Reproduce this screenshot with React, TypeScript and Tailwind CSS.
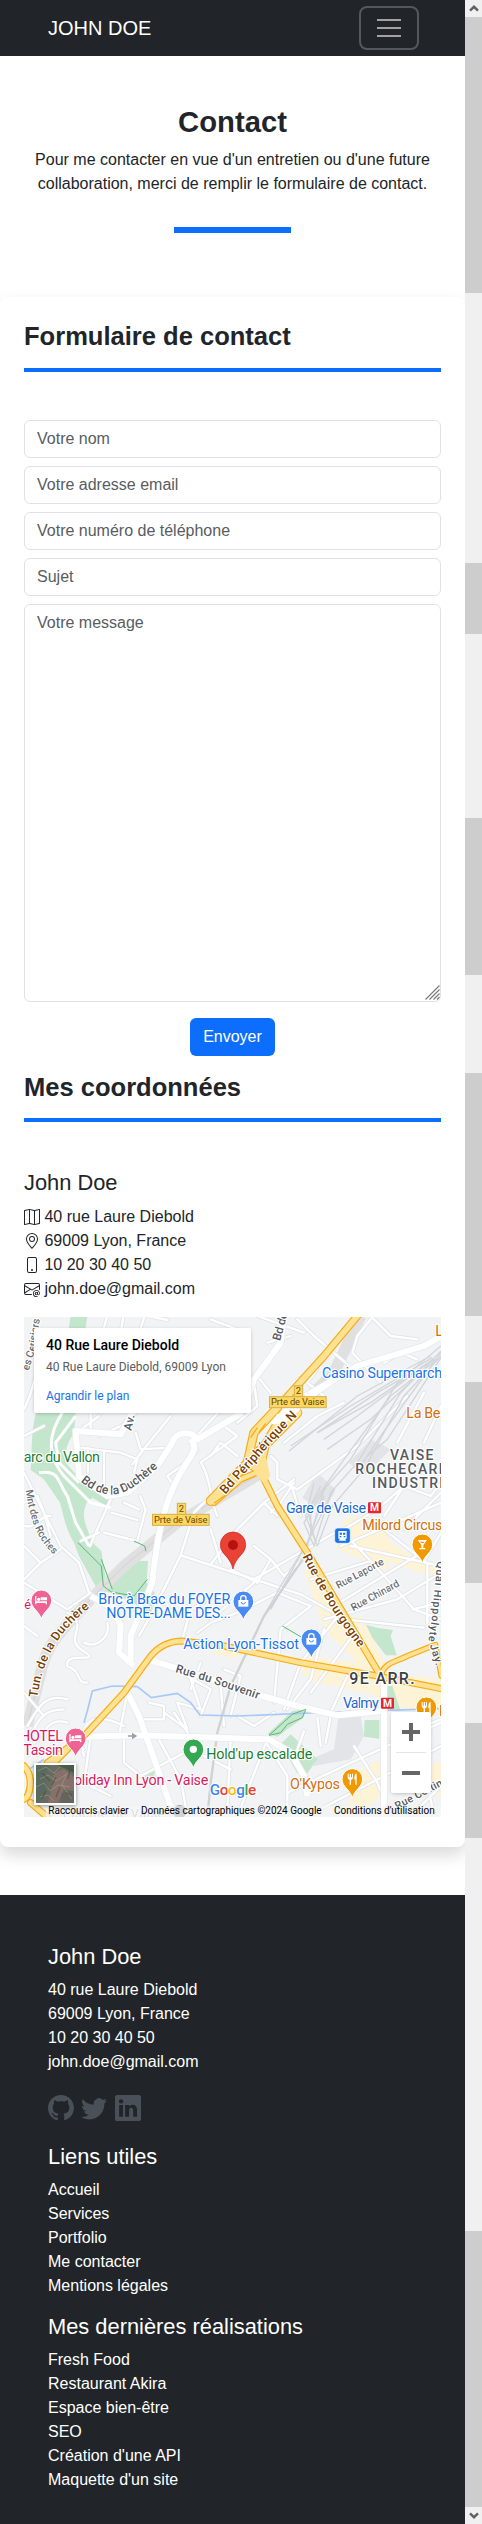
import React from "react";
import {
  BsMap,
  BsGeoAlt,
  BsPhone,
  BsEnvelopeAt,
  BsGithub,
  BsTwitter,
  BsLinkedin,
} from "react-icons/bs";

const contactFields = ["Votre nom", "Votre adresse email", "Votre numéro de téléphone", "Sujet"];

const contactDetails = [
  { icon: BsMap, text: "40 rue Laure Diebold" },
  { icon: BsGeoAlt, text: "69009 Lyon, France" },
  { icon: BsPhone, text: "10 20 30 40 50" },
  { icon: BsEnvelopeAt, text: "john.doe@gmail.com" },
];

const links = ["Accueil", "Services", "Portfolio", "Me contacter", "Mentions légales"];
const projects = [
  "Fresh Food",
  "Restaurant Akira",
  "Espace bien-être",
  "SEO",
  "Création d'une API",
  "Maquette d'un site",
];

/* ---------- Map drawing ---------- */

const greens = [
  "M140 0H190L184 40H134Z",
  "M36 290H155L150 352C135 370 118 410 125 440L160 480L200 520L262 545L245 568L205 545L188 560C175 590 178 610 192 645L205 680L232 705L245 790L330 735L372 735L368 800L392 830L380 900L350 880L330 860L268 832L220 820L165 720L150 680C125 640 120 600 108 560L60 490L20 462C25 400 20 350 36 290Z",
  "M1026 926L1062 936L1107 942L1100 960L1118 1018H1085L1045 965Z",
  "M730 1255L805 1185L848 1180L838 1205L790 1240L760 1262Z",
  "M770 1285L800 1255L880 1330L850 1372H820Z",
  "M1022 1212H1066V1268L1020 1262Z",
  "M358 1372L395 1358L390 1380L362 1386Z",
  "M1085 1110H1105L1130 1185H1085Z",
];

const yellows = [
  "M960 612L990 600L1080 640L1100 680L1190 735L1251 750V790L1080 735L1000 725L940 700Z",
  "M840 760L880 770L960 900L1010 900L1100 1070L1251 1090V1170L1150 1180L1030 1130L860 1095L830 1062L845 1018L1000 1040L900 940Z",
  "M560 990L640 1000L640 1030L575 1015Z",
  "M985 700L1050 690L1100 760L1040 760Z",
  "M1010 1360L1070 1330V1440L1000 1500H960Z",
  "M1190 1340H1251V1440H1200Z",
];

const minorRoads = [
  "M250 0L238 40M298 0L292 40M362 0L350 36M372 0L430 12M60 330L0 360M60 60C40 90 50 180 0 280",
  "M150 355L225 300M200 350V292M225 360L290 330L335 290M165 395L290 410M192 395V470M240 410V530M290 410L340 430L330 470M335 350L350 400L440 395M440 300L355 405L325 445M450 510L430 480L500 430L520 400L500 380",
  "M262 545L220 640L198 690M348 540L365 580L340 675L240 650M262 590L340 612M225 650L170 675M345 580L300 560",
  "M0 560L40 540L60 590L80 660M0 470L30 530L110 690L165 740L195 830M0 690L50 740L0 790M50 740L110 700M0 630C40 640 40 600 80 600",
  "M580 600C560 560 560 480 530 440L640 360L600 330M560 420L590 380L640 420M500 380L600 270L690 180M640 320L700 270L690 200M700 180L740 230M730 80L800 60M900 240L850 200L880 160L820 190",
  "M820 10L870 60L1000 170M700 0L840 50M1000 60L985 110L1070 200M1000 60L1040 10M1080 140L1130 110L1180 130M560 10L640 40M1040 0L1100 60L1180 70",
  "M470 718L510 590L600 500M470 718L830 835L930 890M470 718L390 880L345 960M560 745L640 640L720 560L810 490M590 740L560 640M620 760L700 800L740 730L690 690M690 790L950 640M740 730L780 780L850 720M720 560L760 600",
  "M740 420L760 440L760 490L820 520M820 520L1000 390L1150 240M810 500L770 560L740 590M780 380L880 300L960 260M830 600L800 500",
  "M1120 380L1200 230M1200 380L1251 270M1140 510L1060 580L960 640M1080 600L1140 510L1220 540L1251 500M1251 530L1180 600L1140 640M950 690L1080 635L1251 560",
  "M950 640L1040 735L1170 880L1251 910M980 690L1251 750M1080 640L1200 735L1251 650M1210 740L1210 920M860 790L1040 735M900 910L1120 850L1251 770M930 870L1210 700M960 910L1200 935M1165 880L1251 860",
  "M475 970L500 880L540 860M520 950L560 920L640 890L760 830M560 910L690 800M760 830L860 870M950 890L830 1040L780 1180M860 870L770 940L750 1160M900 940L860 1090L790 1180M970 1080L920 1190M1000 940L860 1130",
  "M0 930L40 960M130 890C200 930 120 960 170 1000C250 1050 120 1000 130 1050C180 1070 150 1100 190 1100M250 920C260 960 220 1000 180 980M0 1130L60 1200M130 1150C60 1130 40 1180 10 1230M120 1180C50 1180 40 1220 20 1260M130 1220C70 1200 60 1260 30 1280",
  "M300 1230C180 1170 160 1250 180 1320M310 1130L285 1260M375 1160L420 1170V1210H340M420 1190L490 1240L460 1160L530 1180L500 1090M490 1080L560 1120L530 1200M600 1230L590 1110M620 1200L650 1080L600 1060M640 1200L690 1230L750 1190M530 1040L500 1120",
  "M200 1262L180 1400L260 1440M400 1262L470 1390L490 1500M300 1262V1340L350 1380L500 1300L620 1360M500 1262L450 1190M620 1265L610 1480M720 1270L790 1380V1500M840 1245L810 1330M880 1205L890 1290M920 1200L905 1280M730 1270L680 1400L640 1500",
  "M790 1430L960 1350L1090 1290L1251 1220M850 1500L1080 1380L1251 1290M990 1290L1060 1400L1100 1500M1100 1270L1251 1210M1160 1500L1251 1410M1190 1300L1230 1500M0 800L130 880L200 830",
];

const greyPatches = [
  "M880 470L935 520L900 590L835 545Z",
  "M945 1190L1010 1200L1020 1260L980 1330L870 1350L870 1325L930 1300Z",
  "M975 440L1040 370L1100 400L1020 480Z",
];

const rails = [
  "M1251 90L1120 200L980 430L900 520L850 690",
  "M1251 105L1130 230L1000 440L920 530L870 690",
  "M1251 120L1140 240L1020 460L925 570L880 690",
  "M1240 130L1100 240L960 430L860 570L860 650",
  "M1235 130L1060 230L880 350",
  "M1230 128L1040 260L880 350",
  "M1225 125L980 270L800 390",
  "M1220 120L1000 240L795 405",
  "M1200 150L1000 300L900 370",
  "M1180 180L1040 310L910 400",
  "M1251 125L1090 370L1030 420",
  "M1251 110L1070 360L1010 450",
  "M870 500L850 580L875 680",
  "M890 510L845 600L880 690",
  "M905 515L840 620L870 690",
  "M930 520L860 660L790 790L740 880",
  "M900 540L850 680L770 810L720 900",
];

const greyTunnel = [
  "M1010 0L930 170L860 240",
  "M730 460L460 620L300 750L200 850C130 930 70 970 50 1070L10 1230",
];

const whiteMajors = [
  "M780 0L770 80L690 190L655 290",
  "M655 290L520 370C500 340 450 350 445 380L400 450L310 530L250 540L165 480L155 345L290 355L325 290",
  "M500 370C530 400 490 430 470 470C420 560 400 650 385 800L320 960L320 1040",
  "M200 840L270 880L290 930L285 1010L330 1050",
  "M845 240L1000 150L1200 90L1251 60",
  "M730 320L830 260L960 170",
  "M310 1130L345 1200L440 1470L480 1510",
  "M370 1030L470 1060L700 1135L820 1170L940 1198L1075 1185",
  "M1080 1100V1500",
  "M185 1262L340 1258L735 1270L800 1310L840 1380L850 1440",
];

const yellowRoads = [
  { d: "M1000 0L900 120L760 275", w: 24 },
  { d: "M760 275L690 350L670 440L720 470", w: 28 },
  { d: "M770 300L730 370L715 440L718 485L760 570L850 710L1070 1080", w: 22 },
  { d: "M720 460L650 490L570 560", w: 20 },
  { d: "M820 290L720 390L560 555", w: 30 },
  { d: "M70 1340L180 1260L300 1130L380 1020C410 985 440 975 475 975L600 990L830 1040L1060 1080L1251 1118", w: 21 },
  { d: "M1070 1080C1080 1040 1110 1040 1150 1020L1230 988", w: 18 },
  { d: "M1235 985L1251 1080", w: 16 },
  { d: "M0 1350C30 1380 20 1440 0 1450M20 1460L70 1503M40 1390L130 1300", w: 22 },
];

type LabelProps = {
  x: number;
  y: number;
  fill: string;
  len?: number;
  size?: number;
  weight?: number;
  spacing?: number;
  children: string;
};

function Label({ x, y, fill, len, size = 43, weight = 400, spacing, children }: LabelProps) {
  return (
    <text
      x={x}
      y={y}
      fill={fill}
      fontSize={size}
      fontWeight={weight}
      letterSpacing={spacing}
      textLength={len}
      stroke="#fff"
      strokeWidth={7}
      strokeLinejoin="round"
      paintOrder="stroke"
    >
      {children}
    </text>
  );
}

type PathLabelProps = { id: string; d: string; len: number; fill?: string; size?: number; children: string };

function PathLabel({ id, d, len, fill = "#55595e", size = 36, children }: PathLabelProps) {
  return (
    <>
      <path id={id} d={d} fill="none" />
      <text
        fill={fill}
        fontSize={size}
        fontWeight={500}
        textLength={len}
        stroke="#fff"
        strokeWidth={7}
        strokeLinejoin="round"
        paintOrder="stroke"
      >
        <textPath href={`#${id}`} textLength={len}>
          {children}
        </textPath>
      </text>
    </>
  );
}

type PinProps = { x: number; y: number; color: string; children: React.ReactNode };

/* A teardrop whose round head is centred on x, y. */
function Pin({ x, y, color, children }: PinProps) {
  return (
    <g transform={`translate(${x} ${y})`}>
      <path
        d="M0 -31A31 31 0 0 1 31 0C31 24 8 30 0 56C-8 30 -31 24 -31 0A31 31 0 0 1 0 -31Z"
        fill={color}
        stroke="#fff"
        strokeWidth="3"
      />
      <g fill="#fff">{children}</g>
    </g>
  );
}

const bed = (
  <path d="M-19 -13H-15V3H17V12H13V8H-15V12H-19ZM-2 -9H17V0H-2ZM-8 -8A5 5 0 1 1 -8.1 -8Z" />
);
const bag = (
  <>
    <path d="M-15 -4H15V16H-15Z" />
    <path d="M-8 -2V-9A8 8 0 0 1 8 -9V-2" fill="none" stroke="#fff" strokeWidth="4" />
    <path d="M-6 2A6 6 0 0 0 6 2" fill="none" stroke="#4a8af4" strokeWidth="3" />
  </>
);
const cutlery = (
  <path d="M-14 -16V-4C-14 1 -8 2 -8 4V17H-4V4C-4 2 2 1 2 -4V-16H-1V-5H-4V-16H-8V-5H-11V-16ZM13 -17C7 -15 6 -9 6 2H9V17H13Z" />
);

function MapDrawing() {
  return (
    <svg viewBox="0 3 1251 1500" className="block h-[500px] w-[417px] font-['Roboto',sans-serif]">
      <rect y="0" width="1251" height="1503" fill="#f1f3f4" />
      {yellows.map((d) => (
        <path key={d} d={d} fill="#fdf4d8" />
      ))}
      {greyPatches.map((d) => (
        <path key={d} d={d} fill="#e2e4e8" />
      ))}
      {greens.map((d) => (
        <path key={d} d={d} fill="#c3e6cd" />
      ))}
      <g fill="none" stroke="#e0e0e0" strokeWidth="34">
        {greyTunnel.map((d) => (
          <path key={d} d={d} />
        ))}
      </g>
      <g fill="none" stroke="#d0d1d3" strokeWidth="3">
        <path d="M730 460L460 620L300 750L200 850C130 930 70 970 50 1070L10 1230" />
      </g>
      <g fill="none" strokeLinejoin="round" strokeLinecap="round">
        {minorRoads.map((d) => (
          <path key={d} d={d} stroke="#e1e4e8" strokeWidth="12" />
        ))}
        {minorRoads.map((d) => (
          <path key={d} d={d} stroke="#fff" strokeWidth="7" />
        ))}
      </g>
      <g fill="none" stroke="#fff" strokeWidth="9" strokeLinejoin="round">
        <path d="M115 290C70 360 70 420 120 480L200 560L260 575M155 300L95 380L105 440L165 500M45 470C110 460 100 500 130 540L155 620L195 690" />
      </g>
      <g fill="none" stroke="#d2d6da" strokeWidth="4">
        {rails.map((d) => (
          <path key={d} d={d} />
        ))}
      </g>
      <path
        d="M850 710L720 900L620 1110L580 1250L560 1400L550 1503"
        fill="none"
        stroke="#cfd1d3"
        strokeWidth="7"
      />
      <path
        d="M180 1220L190 1185L205 1125L265 1110L340 1112L382 1145L460 1132L500 1160L528 1197L640 1200L930 1188L1251 1178M0 1370L60 1330"
        fill="none"
        stroke="#a9c8fa"
        strokeWidth="5"
      />
      <g fill="none" strokeLinejoin="round">
        {whiteMajors.map((d) => (
          <path key={d} d={d} stroke="#e7e9ec" strokeWidth="22" />
        ))}
        {whiteMajors.map((d) => (
          <path key={d} d={d} stroke="#fff" strokeWidth="18" />
        ))}
        {yellowRoads.map((r) => (
          <path key={r.d} d={r.d} stroke="#f9ab14" strokeWidth={r.w} strokeLinecap="round" />
        ))}
        {yellowRoads.map((r) => (
          <path key={r.d} d={r.d} stroke="#fde293" strokeWidth={r.w - 7} strokeLinecap="round" />
        ))}
      </g>
      <path d="M690 470L720 395L738 480L722 505Z" fill="#fde293" />
      <path d="M735 325L760 295L815 265L830 280L780 325Z" fill="#fff" />
      <path d="M705 350L725 322M700 335L680 365M570 562L625 522" fill="none" stroke="#f9ab14" strokeWidth="4" />
      <path
        d="M162 680L232 750L238 810L262 828L330 840L370 790M232 730L265 820M330 675L362 690L366 706M775 930L835 965M735 1258L805 1195L845 1180L835 1205L790 1225L770 1250Z"
        fill="none"
        stroke="#5bb974"
        strokeWidth="3"
      />
      <path d="M312 1260H334M326 1254L336 1260L326 1266Z" stroke="#9aa0a6" strokeWidth="4" fill="#9aa0a6" />

      <PathLabel id="cerisiers" d="M14 165L34 100L48 5" len={160} size={32} fill="#6b7075">
        es Cerisiers
      </PathLabel>
      <PathLabel id="av" d="M322 345L334 290" len={48} size={34}>
        Av.
      </PathLabel>
      <PathLabel id="bdde" d="M768 76L792 -10" len={86} size={35}>
        Bd de
      </PathLabel>
      <PathLabel id="duchere" d="M170 496C215 535 270 550 320 518C355 496 380 475 420 436" len={268} size={36}>
        Bd de la Duchère
      </PathLabel>
      <PathLabel id="roches" d="M5 523C20 620 40 670 96 722" len={215} size={31} fill="#6b7075">
        Mnt des Roches
      </PathLabel>
      <PathLabel id="periph" d="M604 536L700 430L760 360L822 298" len={320} size={38} fill="#783f04">
        Bd Périphérique N
      </PathLabel>
      <PathLabel id="tunnel" d="M40 1145C55 1030 100 950 200 872" len={322} size={37} fill="#783f04">
        Tun. de la Duchère
      </PathLabel>
      <PathLabel id="bourgogne" d="M836 722C870 790 920 885 1006 996" len={322} size={37} fill="#783f04">
        Rue de Bourgogne
      </PathLabel>
      <PathLabel id="souvenir" d="M453 1068L560 1100L702 1149" len={262} size={35}>
        Rue du Souvenir
      </PathLabel>
      <PathLabel id="laporte" d="M943 819L1086 741" len={158} size={31} fill="#6b7075">
        Rue Laporte
      </PathLabel>
      <PathLabel id="chinard" d="M988 886L1130 808" len={160} size={31} fill="#6b7075">
        Rue Chinard
      </PathLabel>
      <PathLabel id="quai" d="M1240 735L1224 900L1213 975L1240 1060" len={320} size={32}>
        Quai Hippolyte Jay.
      </PathLabel>
      <PathLabel id="cottin" d="M1120 1481L1256 1408" len={156} size={32}>
        Rue Cottin
      </PathLabel>

      <Label x={-26} y={438} fill="#188038" len={254}>Parc du Vallon</Label>
      <Label x={894} y={186} fill="#1a73e8" len={382}>Casino Supermarché</Label>
      <Label x={1234} y={59} fill="#d56e0c">La</Label>
      <Label x={1147} y={306} fill="#d56e0c" len={102}>La Be</Label>
      <Label x={1098} y={431} fill="#55595e" weight={500} size={42} spacing={4}>VAISE</Label>
      <Label x={994} y={474} fill="#55595e" weight={500} size={42} spacing={4}>ROCHECARDON</Label>
      <Label x={1044} y={516} fill="#55595e" weight={500} size={42} spacing={4}>INDUSTRIE</Label>
      <Label x={786} y={590} fill="#1967d2" len={240}>Gare de Vaise</Label>
      <Label x={1015} y={642} fill="#d56e0c" len={240}>Milord Circus</Label>
      <Label x={223} y={864} fill="#1a73e8" len={396}>Bric à Brac du FOYER</Label>
      <Label x={247} y={906} fill="#1a73e8" len={373}>NOTRE-DAME DES...</Label>
      <Label x={478} y={999} fill="#1a73e8" len={347}>Action Lyon-Tissot</Label>
      <Label x={976} y={1104} fill="#3c4043" weight={500} size={48} spacing={4}>9E ARR.</Label>
      <Label x={957} y={1175} fill="#1967d2" len={107}>Valmy</Label>
      <Label x={-12} y={1275} fill="#d81b60" len={129}>HOTEL</Label>
      <Label x={-2} y={1317} fill="#d81b60" len={119}>Tassin</Label>
      <Label x={-12} y={880} fill="#d81b60" size={38}>té</Label>
      <Label x={547} y={1329} fill="#188038" len={318}>Hold'up escalade</Label>
      <Label x={120} y={1407} fill="#d81b60" len={433}>Holiday Inn Lyon - Vaise</Label>
      <Label x={798} y={1419} fill="#d56e0c" len={150}>O'Kypos</Label>
      <Label x={1245} y={1200} fill="#d56e0c">P</Label>
      <circle cx="467" cy="1487" r="20" fill="#80868b" />
      <Label x={116} y={1507} fill="#9aa0a6" size={38} len={305}>Piscine de Vaise</Label>

      {[
        { x: 384, y: 561 },
        { x: 735, y: 208 },
      ].map((s) => (
        <g key={s.x} transform={`translate(${s.x} ${s.y})`} fontSize="28" fill="#6a4a00">
          <rect x="76" y="1" width="25" height="34" fill="#fdd663" stroke="#d5b04c" strokeWidth="3" />
          <rect x="1.5" y="34" width="170" height="33" fill="#fdd663" stroke="#d5b04c" strokeWidth="3" />
          <text x="80" y="27">2</text>
          <text x="6" y="60" textLength="160">Prte de Vaise</text>
        </g>
      ))}

      {[
        { x: 1032, y: 559 },
        { x: 1071, y: 1145 },
      ].map((m) => (
        <g key={m.x} transform={`translate(${m.x} ${m.y})`}>
          <rect width="39" height="33" rx="3" fill="#e8242d" />
          <text x="6" y="27" fontSize="31" fontWeight="700" fill="#fff">M</text>
        </g>
      ))}

      <g transform="translate(932 636)">
        <rect width="47" height="46" rx="9" fill="#1a73e8" stroke="#fff" strokeWidth="2" />
        <path d="M11 9H36V32H31L35 38H12L16 32H11ZM15 14V20H22V14ZM25 14V20H32V14ZM15 24V28H20V24ZM27 24V28H32V24Z" fill="#fff" fillRule="evenodd" />
      </g>

      <Pin x={52} y={853} color="#f06292">{bed}</Pin>
      <Pin x={155} y={1267} color="#f06292">{bed}</Pin>
      <Pin x={658} y={856} color="#4a8af4">{bag}</Pin>
      <Pin x={862} y={970} color="#4a8af4">{bag}</Pin>
      <Pin x={1195} y={685} color="#f29900">
        <path d="M-14 -13H14L3 2V11H9V15H-9V11H-3V2ZM-7 -8L-4 -4H4L7 -8Z" fillRule="evenodd" />
      </Pin>
      <Pin x={1207} y={1174} color="#f29900">{cutlery}</Pin>
      <Pin x={985} y={1389} color="#f29900">{cutlery}</Pin>
      <Pin x={508} y={1300} color="#34a853">
        <circle r="11" />
      </Pin>

      <path
        d="M627 648A38 38 0 0 1 665 686C665 716 635 720 627 759C619 720 589 716 589 686A38 38 0 0 1 627 648Z"
        fill="#ea4335"
        stroke="#c5221f"
        strokeWidth="2"
      />
      <circle cx="627" cy="687" r="15" fill="#b31412" />

      <text x="557" y="1437" fontSize="46" fontWeight="500" textLength="140" stroke="#fff" strokeWidth="6" paintOrder="stroke">
        <tspan fill="#4285f4">G</tspan>
        <tspan fill="#ea4335">o</tspan>
        <tspan fill="#fbbc04">o</tspan>
        <tspan fill="#4285f4">g</tspan>
        <tspan fill="#34a853">l</tspan>
        <tspan fill="#ea4335">e</tspan>
      </text>

      <rect x="66" y="1469" width="1185" height="34" fill="#f5f5f5" fillOpacity="0.7" />
      <g fontSize="30" fill="#000">
        <text x="73" y="1494" textLength="241">Raccourcis clavier</text>
        <text x="351" y="1494" textLength="542">Données cartographiques ©2024 Google</text>
        <text x="930" y="1494" textLength="302">Conditions d'utilisation</text>
      </g>
    </svg>
  );
}

function SatelliteThumb() {
  return (
    <div className="absolute bottom-3 left-2.5 h-[42px] w-[42px] border-2 border-white bg-[#666c60] shadow-[0_1px_4px_rgba(0,0,0,0.4)]">
      <svg viewBox="0 0 38 38" className="block size-full">
        <rect width="38" height="38" fill="#686c60" />
        <path d="M0 0H14L8 12L12 22L4 38H0Z" fill="#5a6a5e" />
        <path d="M18 8L28 4L38 12V26L28 24L22 38H12L16 22Z" fill="#87706a" />
        <path d="M22 0H38V8L30 4Z" fill="#4a5a4a" />
        <path d="M26 28L38 26V38H24Z" fill="#66645c" />
        <path
          d="M2 6L10 2L18 8L24 2M4 14L12 10L20 16L32 8M0 22L8 18L14 26L22 20L34 22M4 32L12 30L18 36M30 10L26 20L36 34"
          fill="none"
          stroke="#a8a89a"
          strokeWidth="0.8"
          strokeOpacity="0.6"
        />
        <path
          d="M6 8L14 16M10 26L6 34M20 12L16 20M30 28L36 30M24 22L20 32M34 4L32 14"
          stroke="#3d4a40"
          strokeWidth="1.3"
          strokeOpacity="0.5"
        />
      </svg>
    </div>
  );
}

function AddressMap() {
  return (
    <div className="relative h-[500px] w-[417px] overflow-hidden">
      <MapDrawing />
      <div className="absolute left-2.5 top-[11px] h-[85px] w-[217px] rounded-[2px] bg-white pl-3 pt-[9px] font-['Roboto',sans-serif] shadow-[0_1px_4px_-1px_rgba(0,0,0,0.3)]">
        <div className="text-[14px] font-medium leading-4 text-black">40 Rue Laure Diebold</div>
        <div className="mt-[6px] text-[12px] leading-4 text-[#5b5b5b]">40 Rue Laure Diebold, 69009 Lyon</div>
        <a className="mt-[13px] block text-[12px] leading-4 text-[#1a73e8]">Agrandir le plan</a>
      </div>
      <SatelliteThumb />
      <div className="absolute bottom-6 left-[367px] flex h-[81px] w-10 flex-col items-center rounded-[2px] bg-white shadow-[0_1px_4px_-1px_rgba(0,0,0,0.3)]">
        <div className="flex h-10 items-center">
          <svg viewBox="0 0 18 18" className="size-[18px]" fill="#666">
            <path d="M7 0H11V7H18V11H11V18H7V11H0V7H7Z" />
          </svg>
        </div>
        <div className="h-px w-[30px] bg-[#e6e6e6]" />
        <div className="flex h-10 items-center">
          <div className="h-1 w-[18px] bg-[#666]" />
        </div>
      </div>
    </div>
  );
}

/* ---------- Page ---------- */

function SectionTitle({ children }: { children: string }) {
  return (
    <h2 className="mb-12 border-b-4 border-[#0d6efd] pb-4 text-[25.54px] font-bold leading-[1.2]">{children}</h2>
  );
}

function FooterTitle({ children }: { children: string }) {
  return <h4 className="mb-2 text-[21.85px] leading-[1.2]">{children}</h4>;
}

const scrollSegments = [
  "h-[276px] bg-[#cdcdcd]",
  "h-[270px]",
  "h-[71px] bg-[#cdcdcd]",
  "h-[184px]",
  "h-[157px] bg-[#cdcdcd]",
  "h-[98px]",
  "h-[243px] bg-[#cdcdcd]",
  "h-[66px]",
  "h-[201px] bg-[#cdcdcd]",
  "h-[140px]",
  "h-[115px] bg-[#cdcdcd]",
  "h-[393px]",
  "h-[276px] bg-[#cdcdcd]",
];

function Scrollbar() {
  return (
    <div className="flex w-[17px] flex-col bg-[#f0f0f0]">
      <div className="flex h-[17px] items-center justify-center">
        <svg viewBox="0 0 10 7" className="h-[7px] w-[10px]" fill="none" stroke="#606060" strokeWidth="2.4">
          <path d="M1 5.7L5 1.8L9 5.7" />
        </svg>
      </div>
      {scrollSegments.map((cls, i) => (
        <div key={i} className={cls} />
      ))}
      <div className="flex h-[17px] items-center justify-center">
        <svg viewBox="0 0 10 7" className="h-[7px] w-[10px]" fill="none" stroke="#606060" strokeWidth="2.4">
          <path d="M1 1.3L5 5.2L9 1.3" />
        </svg>
      </div>
    </div>
  );
}

export default function App() {
  return (
    <div className="flex h-[2524px] w-[482px] overflow-hidden bg-white font-['Liberation_Sans',Arial,sans-serif] text-base leading-6 text-[#212529]">
      <div className="flex w-[465px] flex-col overflow-hidden">
        <nav className="flex h-14 shrink-0 items-center justify-between bg-[#212529] pl-12 pr-[46px]">
          <a className="text-xl leading-[30px] text-white">JOHN DOE</a>
          <button className="flex h-11 w-[60px] items-center justify-center rounded-lg border-2 border-[#55585b]">
            <svg viewBox="0 0 30 30" className="size-[30px]" stroke="#a0a2a3" strokeWidth="2" strokeLinecap="square">
              <path d="M4 7H26M4 15H26M4 23H26" />
            </svg>
          </button>
        </nav>

        <header className="flex h-[241px] shrink-0 flex-col items-center px-6 pt-[48.5px] text-center">
          <h1 className="mb-2 text-[29.23px] font-bold leading-[1.2]">Contact</h1>
          <p>Pour me contacter en vue d'un entretien ou d'une future collaboration, merci de remplir le formulaire de contact.</p>
          <div className="mt-[31.5px] h-1.5 w-[117px] bg-[#0d6efd]" />
        </header>

        <main className="h-[1550px] shrink-0 rounded-lg bg-white p-6 shadow-[0_8px_16px_rgba(0,0,0,0.15)]">
          <section>
            <SectionTitle>Formulaire de contact</SectionTitle>
            <form className="flex flex-col items-center">
              {contactFields.map((field) => (
                <input
                  key={field}
                  placeholder={field}
                  className="mb-2 h-[38px] w-full rounded-md border border-[#dee2e6] px-3 py-1.5 placeholder:text-[#595c5f] placeholder:opacity-100"
                />
              ))}
              <div className="relative w-full">
                <textarea
                  placeholder="Votre message"
                  className="block h-[398px] w-full resize-none rounded-md border border-[#dee2e6] px-3 py-1.5 placeholder:text-[#595c5f] placeholder:opacity-100"
                />
                <svg viewBox="0 0 15 15" className="absolute bottom-[1.5px] right-[1.5px] size-[15px]" stroke="#777" strokeWidth="1.1">
                  <path d="M0.5 14.5L14.5 0.5M4.5 14.5L14.5 4.5M8.5 14.5L14.5 8.5M12 14.5L14.5 12" />
                </svg>
              </div>
              <button type="button" className="mb-4 mt-4 h-[38px] w-[85px] rounded-md bg-[#0d6efd] text-white">
                Envoyer
              </button>
            </form>
          </section>

          <section>
            <SectionTitle>Mes coordonnées</SectionTitle>
            <h4 className="mb-2 text-[21.85px] leading-[1.2]">John Doe</h4>
            <ul className="mb-4">
              {contactDetails.map(({ icon: Icon, text }) => (
                <li key={text} className="flex items-center gap-[4.45px]">
                  <Icon className="size-4" />
                  {text}
                </li>
              ))}
            </ul>
            <AddressMap />
          </section>
        </main>

        <footer className="mt-12 grow bg-[#212529] px-12 pt-[48.6px] text-white">
          <FooterTitle>John Doe</FooterTitle>
          {contactDetails.map(({ text }) => (
            <div key={text}>{text}</div>
          ))}
          <div className="mb-[22.8px] mt-[21.2px] flex gap-[7.4px] text-[#495057]">
            <BsGithub className="size-[26px]" />
            <BsTwitter className="size-[26px]" />
            <BsLinkedin className="size-[26px]" />
          </div>
          <FooterTitle>Liens utiles</FooterTitle>
          <ul className="mb-4">
            {links.map((item) => (
              <li key={item}>{item}</li>
            ))}
          </ul>
          <FooterTitle>Mes dernières réalisations</FooterTitle>
          <ul>
            {projects.map((item) => (
              <li key={item}>{item}</li>
            ))}
          </ul>
        </footer>
      </div>
      <Scrollbar />
    </div>
  );
}
